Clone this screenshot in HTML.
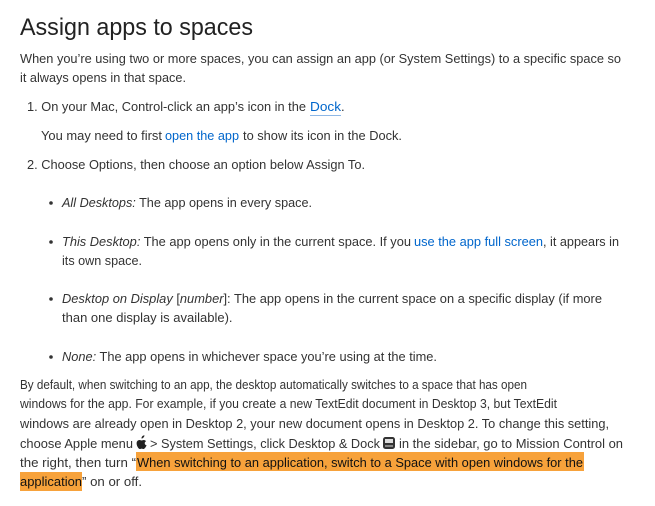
<!DOCTYPE html>
<html><head><meta charset="utf-8"><style>
html,body{margin:0;padding:0;background:#fff;width:655px;height:506px;overflow:hidden}
svg{display:block}
text{font-family:"Liberation Sans",sans-serif;font-size:13px;fill:#333}
.l{fill:#0066cc}
.i{font-style:italic}
</style></head><body>
<svg width="655" height="506" viewBox="0 0 655 506" xmlns="http://www.w3.org/2000/svg">
<text x="20" y="35" style="font-size:24px;fill:#222" textLength="233" lengthAdjust="spacingAndGlyphs">Assign apps to spaces</text>
<text x="20" y="63" textLength="601" lengthAdjust="spacingAndGlyphs">When you’re using two or more spaces, you can assign an app (or System Settings) to a specific space so</text>
<text x="20" y="82" textLength="166" lengthAdjust="spacingAndGlyphs">it always opens in that space.</text>

<text x="27" y="111" textLength="279" lengthAdjust="spacingAndGlyphs">1. On your Mac, Control-click an app’s icon in the</text>
<text x="310" y="111" class="l" textLength="31" lengthAdjust="spacingAndGlyphs">Dock</text>
<text x="341" y="111">.</text>
<line x1="310" y1="115.5" x2="341" y2="115.5" stroke="#8fb8e6" stroke-width="1"/>

<text x="41" y="140" textLength="121" lengthAdjust="spacingAndGlyphs">You may need to first</text>
<text x="165" y="140" class="l" textLength="74" lengthAdjust="spacingAndGlyphs">open the app</text>
<text x="243" y="140" textLength="159" lengthAdjust="spacingAndGlyphs">to show its icon in the Dock.</text>

<text x="27" y="169" textLength="338" lengthAdjust="spacingAndGlyphs">2. Choose Options, then choose an option below Assign To.</text>

<circle cx="51" cy="203" r="1.8" fill="#333"/>
<text x="62" y="207" textLength="250" lengthAdjust="spacingAndGlyphs"><tspan class="i">All Desktops:</tspan> The app opens in every space.</text>

<circle cx="51" cy="242" r="1.8" fill="#333"/>
<text x="62" y="246" textLength="349" lengthAdjust="spacingAndGlyphs"><tspan class="i">This Desktop:</tspan> The app opens only in the current space. If you</text>
<text x="414" y="246" class="l" textLength="129" lengthAdjust="spacingAndGlyphs">use the app full screen</text>
<text x="543" y="246" textLength="76" lengthAdjust="spacingAndGlyphs">, it appears in</text>
<text x="62" y="265" textLength="80" lengthAdjust="spacingAndGlyphs">its own space.</text>

<circle cx="51" cy="299" r="1.8" fill="#333"/>
<text x="62" y="303" textLength="540" lengthAdjust="spacingAndGlyphs"><tspan class="i">Desktop on Display</tspan> [<tspan class="i">number</tspan>]: The app opens in the current space on a specific display (if more</text>
<text x="62" y="322">than one display is available).</text>

<circle cx="51" cy="357" r="1.8" fill="#333"/>
<text x="62" y="361" textLength="375" lengthAdjust="spacingAndGlyphs"><tspan class="i">None:</tspan> The app opens in whichever space you’re using at the time.</text>

<text x="20" y="389" textLength="507" lengthAdjust="spacingAndGlyphs">By default, when switching to an app, the desktop automatically switches to a space that has open</text>
<text x="20" y="408" textLength="537" lengthAdjust="spacingAndGlyphs">windows for the app. For example, if you create a new TextEdit document in Desktop 3, but TextEdit</text>
<text x="20" y="428" textLength="589" lengthAdjust="spacingAndGlyphs">windows are already open in Desktop 2, your new document opens in Desktop 2. To change this setting,</text>
<text x="20" y="448" textLength="113" lengthAdjust="spacingAndGlyphs">choose Apple menu</text>
<path d="M143.5 437.5c.6-.7 1-1.5.9-2.3-.8 0-1.6.5-2.1 1.1-.5.5-.9 1.4-.8 2.2.8.1 1.6-.4 2-1zM146.6 445.3c-.4.9-.6 1.3-1.1 2.1-.7 1-1.3 1.6-2 1.6-.7 0-1-.4-1.8-.4s-1.2.4-1.9.4c-.8 0-1.3-.8-2-1.8-1.3-2.1-1.5-4.5-.7-5.8.6-.9 1.5-1.4 2.4-1.4.9 0 1.4.5 2.1.5.7 0 1.2-.5 2.2-.5.8 0 1.6.4 2.2 1.2-1.9 1-1.6 3.7.6 4.1z" fill="#222"/>
<text x="150" y="448" textLength="230" lengthAdjust="spacingAndGlyphs">&gt; System Settings, click Desktop &amp; Dock</text>
<rect x="383" y="437" width="12" height="12" rx="2.5" fill="#333"/>
<rect x="385" y="439" width="8" height="4" fill="#ddd"/>
<rect x="385" y="445" width="8" height="2" fill="#888"/>
<text x="399" y="448" textLength="224" lengthAdjust="spacingAndGlyphs">in the sidebar, go to Mission Control on</text>
<rect x="136" y="452" width="448" height="19" fill="#f7a23b"/>
<rect x="20" y="472" width="62" height="19" fill="#f7a23b"/>
<text x="20" y="467" textLength="116" lengthAdjust="spacingAndGlyphs">the right, then turn “</text>
<text x="137" y="467" style="fill:#111" textLength="446" lengthAdjust="spacingAndGlyphs">When switching to an application, switch to a Space with open windows for the</text>
<text x="20" y="486" style="fill:#111" textLength="62" lengthAdjust="spacingAndGlyphs">application</text>
<text x="82" y="486" textLength="60" lengthAdjust="spacingAndGlyphs">” on or off.</text>
</svg>
</body></html>
